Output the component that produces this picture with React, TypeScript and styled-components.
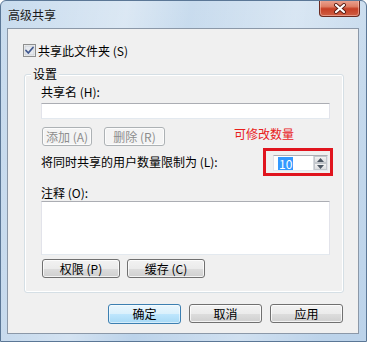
import styled, { createGlobalStyle } from "styled-components";

const Global = createGlobalStyle`
    html, body {
        margin: 0;
        padding: 0;
    }
    body {
        font-family: "Noto Sans CJK SC", "Noto Sans", sans-serif;
        font-size: 12px;
        color: #000;
    }
    * {
        box-sizing: border-box;
    }
`;

const Window = styled.div`
    width: 367px;
    height: 342px;
    display: flex;
    flex-direction: column;
    border: 1px solid #5b7796;
    border-radius: 6px 6px 0 0;
    background:
        linear-gradient(
            100deg,
            rgba(255, 255, 255, 0) 0%,
            rgba(255, 255, 255, 0.35) 30%,
            rgba(255, 255, 255, 0) 45%,
            rgba(255, 255, 255, 0.3) 70%,
            rgba(255, 255, 255, 0) 90%
        ),
        linear-gradient(180deg, #c9dcee 0%, #bcd3ea 100%);
    overflow: hidden;
`;

const TitleBar = styled.div`
    height: 27px;
    display: flex;
    justify-content: space-between;
    align-items: flex-start;
    padding-left: 7px;
`;

const Title = styled.span`
    margin-top: 7px;
    font-size: 12px;
    line-height: 13px;
    color: #1a1a1a;
`;

const CloseButton = styled.div`
    width: 41px;
    height: 17px;
    margin-top: -1px;
    margin-right: 6px;
    display: flex;
    align-items: center;
    justify-content: center;
    border: 1px solid #6a2a20;
    border-top: none;
    border-radius: 0 0 4px 4px;
    background: linear-gradient(
        180deg,
        #eba594 0%,
        #df7f66 40%,
        #c63f25 55%,
        #cf5f44 100%
    );
    box-shadow: inset 0 0 0 1px rgba(255, 210, 200, 0.5);
`;

const Panel = styled.div`
    margin: 0 7px 7px 6px;
    border: 1px solid #8b98a8;
    background: #f0f0f0;
    padding: 15px 14px 9px 15px;
    display: flex;
    flex-direction: column;
`;

const CheckRow = styled.label`
    display: flex;
    align-items: center;
    gap: 2px;
    height: 13px;
    line-height: 13px;
`;

const Group = styled.div`
    position: relative;
    margin: 17px 0 0 1px;
    border: 1px solid #d5dfe5;
    border-radius: 3px;
    box-shadow: inset 0 0 0 1px #fff;
    padding: 11px 13px 14px 16px;
    display: flex;
    flex-direction: column;
`;

const Legend = styled.span`
    position: absolute;
    top: -8px;
    left: 6px;
    padding: 0 2px;
    background: #f0f0f0;
    line-height: 13px;
`;

const Label = styled.div<{ $top?: number }>`
    margin-top: ${(p) => p.$top ?? 0}px;
    line-height: 12px;
    height: 12px;
    white-space: nowrap;
`;

const TextBox = styled.div<{ $top: number; $height: number }>`
    margin-top: ${(p) => p.$top}px;
    height: ${(p) => p.$height}px;
    background: #fff;
    border: 1px solid #e2e3ea;
    border-top-color: #abadb3;
    border-bottom-color: #e3e9ef;
`;

const Row = styled.div<{ $top: number }>`
    display: flex;
    align-items: center;
    margin-top: ${(p) => p.$top}px;
`;

const Button = styled.button<{
    $width: number;
    $variant?: "normal" | "disabled" | "default";
    $left?: number;
}>`
    width: ${(p) => p.$width}px;
    height: ${(p) => (p.$variant === "default" ? 20 : 19)}px;
    margin-left: ${(p) => p.$left ?? 0}px;
    padding: 0;
    font-family: inherit;
    font-size: 12px;
    line-height: 12px;
    white-space: pre;
    border-radius: 3px;
    color: ${(p) => (p.$variant === "disabled" ? "#8d8d8d" : "#000")};
    border: 1px solid
        ${(p) =>
            p.$variant === "disabled"
                ? "#adb2b5"
                : p.$variant === "default"
                  ? "#3c7fb1"
                  : "#707070"};
    background: ${(p) =>
        p.$variant === "disabled"
            ? "#f4f4f4"
            : p.$variant === "default"
              ? "linear-gradient(180deg, #eaf6fd 0%, #d9f0fc 50%, #bee6fd 51%, #a7d9f5 100%)"
              : "linear-gradient(180deg, #f2f2f2 0%, #ebebeb 50%, #dddddd 51%, #cfcfcf 100%)"};
    box-shadow: inset 0 0 0 1px
        ${(p) =>
            p.$variant === "default"
                ? "rgba(255, 255, 255, 0.5)"
                : "rgba(255, 255, 255, 0.75)"};
`;

const Note = styled.span`
    align-self: flex-start;
    margin-top: 1px;
    margin-left: 69px;
    color: #e8201c;
    line-height: 12px;
    font-size: 12px;
`;

const Annotation = styled.div`
    margin-left: auto;
    margin-right: -3px;
    border: 3px solid #e0141e;
    padding: 4px 2px 2px 7px;
`;

const Spinner = styled.div`
    width: 55px;
    height: 16px;
    display: flex;
    background: #fff;
    border: 1px solid #e2e3ea;
    border-top-color: #abadb3;
    border-bottom-color: #e3e9ef;
`;

const SpinValue = styled.div`
    flex: 1;
    display: flex;
    align-items: center;
    padding-left: 4px;
`;

const Selected = styled.span`
    background: #3399ff;
    color: #fff;
    line-height: 13px;
    padding: 0 1px;
`;

const SpinButtons = styled.div`
    width: 14px;
    display: flex;
    flex-direction: column;
    border-left: 1px solid #d6d9de;
`;

const SpinHalf = styled.div`
    flex: 1;
    display: flex;
    align-items: center;
    justify-content: center;
    background: linear-gradient(180deg, #f3f3f3, #dcdde0);
    border: 1px solid #c3c7cc;
`;

const BottomBar = styled.div`
    display: flex;
    justify-content: flex-end;
    gap: 8px;
    margin-top: 11px;
    margin-right: 1px;
`;

const CheckIcon = () => (
    <svg width="13" height="13" viewBox="0 0 13 13">
        <rect x="0.5" y="0.5" width="12" height="12" fill="#f4f4f4" stroke="#8e8f8f" />
        <rect x="2" y="2" width="9" height="9" fill="#e6e9ee" stroke="#bcc2ca" strokeWidth="0.6" />
        <path
            d="M3 6.5 L5.3 9 L10 3.5"
            fill="none"
            stroke="#42598f"
            strokeWidth="1.8"
            strokeLinecap="round"
            strokeLinejoin="round"
        />
    </svg>
);

const CloseIcon = () => (
    <svg width="14" height="11" viewBox="0 0 14 11">
        <path d="M3 2 L11 9 M11 2 L3 9" stroke="#5a1d14" strokeWidth="4" strokeLinecap="round" />
        <path d="M3 2 L11 9 M11 2 L3 9" stroke="#fff" strokeWidth="2.2" strokeLinecap="round" />
    </svg>
);

const Arrow = ({ up }: { up?: boolean }) => (
    <svg width="7" height="4" viewBox="0 0 7 4">
        <path d={up ? "M0 4 L3.5 0 L7 4 Z" : "M0 0 L3.5 4 L7 0 Z"} fill="#4d5763" />
    </svg>
);

export default function App() {
    return (
        <>
            <Global />
            <Window>
                <TitleBar>
                    <Title>高级共享</Title>
                    <CloseButton>
                        <CloseIcon />
                    </CloseButton>
                </TitleBar>
                <Panel>
                    <CheckRow>
                        <CheckIcon />
                        <span>共享此文件夹 (S)</span>
                    </CheckRow>
                    <Group>
                        <Legend>设置</Legend>
                        <Label>共享名 (H):</Label>
                        <TextBox $top={5} $height={16} />
                        <Row $top={8}>
                            <Button $width={50} $variant="disabled" $left={1}>
                                添加 (A)
                            </Button>
                            <Button $width={61} $variant="disabled" $left={12}>
                                删除 (R)
                            </Button>
                            <Note>可修改数量</Note>
                        </Row>
                        <Row $top={2}>
                            <Label>将同时共享的用户数量限制为 (L):</Label>
                            <Annotation>
                                <Spinner>
                                    <SpinValue>
                                        <Selected>10</Selected>
                                    </SpinValue>
                                    <SpinButtons>
                                        <SpinHalf>
                                            <Arrow up />
                                        </SpinHalf>
                                        <SpinHalf>
                                            <Arrow />
                                        </SpinHalf>
                                    </SpinButtons>
                                </Spinner>
                            </Annotation>
                        </Row>
                        <Label $top={11}>注释 (O):</Label>
                        <TextBox $top={2} $height={54} />
                        <Row $top={4}>
                            <Button $width={78} $left={1}>
                                权限 (P)
                            </Button>
                            <Button $width={78} $left={7}>
                                缓存 (C)
                            </Button>
                        </Row>
                    </Group>
                    <BottomBar>
                        <Button $width={73} $variant="default">
                            确定
                        </Button>
                        <Button $width={73}>取消</Button>
                        <Button $width={73}>应用</Button>
                    </BottomBar>
                </Panel>
            </Window>
        </>
    );
}
